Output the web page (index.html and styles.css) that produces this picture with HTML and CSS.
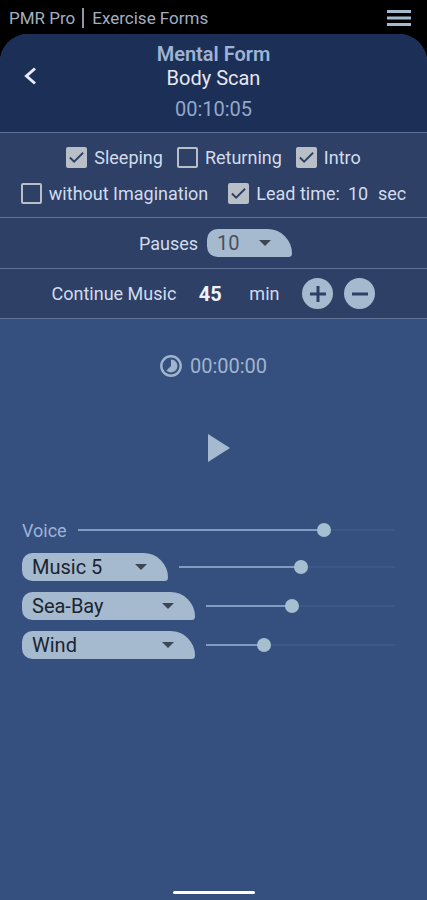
FILE: index.html
```html
<!DOCTYPE html>
<html lang="en">
<head>
    <meta charset="UTF-8">
    <meta name="viewport" content="width=device-width, initial-scale=1.0">
    <title>PMR Pro | Exercise Forms</title>
    <link rel="stylesheet" href="styles.css">
</head>
<body>

    <header class="top-bar">
        <span class="app-name">PMR Pro</span>
        <span class="page-name">Exercise Forms</span>
        <button class="menu-button" aria-label="Menu">
            <svg width="24" height="16" viewBox="0 0 24 16"><path d="M0 1.5h24M0 8h24M0 14.5h24" stroke="currentColor" stroke-width="3"/></svg>
        </button>
    </header>

    <main class="screen">
        <!-- Exercise title -->
        <div class="exercise-header">
            <button class="back-button" aria-label="Back">
                <svg width="14" height="18" viewBox="0 0 14 18"><path d="M12 1.500L3.500 9l8.500 7.500" fill="none" stroke="currentColor" stroke-width="3"/></svg>
            </button>
            <div class="exercise-title">
                <h1>Mental Form</h1>
                <h2>Body Scan</h2>
                <div class="duration">00:10:05</div>
            </div>
        </div>

        <!-- Options -->
        <div class="options">
            <div class="option-row">
                <label class="check"><input type="checkbox" checked>Sleeping</label>
                <label class="check"><input type="checkbox">Returning</label>
                <label class="check"><input type="checkbox" checked>Intro</label>
            </div>
            <div class="option-row wide">
                <label class="check"><input type="checkbox">without Imagination</label>
                <div class="lead-time">
                    <label class="check"><input type="checkbox" checked>Lead time:</label>
                    <input class="seconds" type="text" value="10" aria-label="Lead time in seconds">
                    <span>sec</span>
                </div>
            </div>
        </div>

        <div class="options pauses">
            <label for="pauses">Pauses</label>
            <span class="drop">
                <select id="pauses"><option>10</option></select>
            </span>
        </div>

        <div class="options continue">
            <label for="minutes">Continue Music</label>
            <input class="minutes" id="minutes" type="text" value="45">
            <span class="unit">min</span>
            <button class="round-button" aria-label="More">
                <svg width="16" height="16" viewBox="0 0 16 16"><path d="M0 8h16M8 0v16" stroke="currentColor" stroke-width="3"/></svg>
            </button>
            <button class="round-button" aria-label="Less">
                <svg width="16" height="16" viewBox="0 0 16 16"><path d="M0 8h16" stroke="currentColor" stroke-width="3"/></svg>
            </button>
        </div>

        <!-- Player -->
        <div class="timer">
            <svg width="22" height="22" viewBox="0 0 24 24">
                <circle cx="12" cy="12" r="10.600" fill="none" stroke="currentColor" stroke-width="2.600"/>
                <path d="M12 5a7 7 0 1 1-5 11.900L12 12z" fill="currentColor"/>
            </svg>
            <span>00:00:00</span>
        </div>
        <button class="play-button" aria-label="Play">
            <svg width="22" height="28" viewBox="0 0 22 28"><path d="M0 0l22 14L0 28z" fill="currentColor"/></svg>
        </button>

        <!-- Volumes -->
        <div class="mixer">
            <div class="channel voice">
                <label for="voice">Voice</label>
                <input type="range" id="voice" min="0" max="100" value="79" style="--level: 79%">
            </div>
            <div class="channel">
                <span class="drop music">
                    <select aria-label="Music"><option>Music 5</option></select>
                </span>
                <input type="range" aria-label="Music volume" min="0" max="100" value="57" style="--level: 57%">
            </div>
            <div class="channel">
                <span class="drop sound">
                    <select aria-label="First sound"><option>Sea-Bay</option></select>
                </span>
                <input type="range" aria-label="First sound volume" min="0" max="100" value="45" style="--level: 45%">
            </div>
            <div class="channel">
                <span class="drop sound">
                    <select aria-label="Second sound"><option>Wind</option></select>
                </span>
                <input type="range" aria-label="Second sound volume" min="0" max="100" value="29" style="--level: 29%">
            </div>
        </div>

        <div class="home-bar"></div>
    </main>

</body>
</html>
```
FILE: styles.css
```css
* {
    box-sizing: border-box;
}

body {
    margin: 0;
    min-height: 100vh;
    display: flex;
    flex-direction: column;
    background-color: #000;
    color: #d2dcee;
    font-family: Roboto, sans-serif;
    font-size: 18px;
}

button {
    display: flex;
    align-items: center;
    justify-content: center;
    padding: 0;
    border: none;
    background: none;
    color: #a5bace;
    cursor: pointer;
}

input, select {
    margin: 0;
    font-family: inherit;
    color: inherit;
}

/* Top bar */
.top-bar {
    display: flex;
    align-items: center;
    height: 34px;
    padding: 2px 16px 0 9px;
    font-size: 17px;
    color: #a3afc0;
}

.app-name {
    padding-right: 7px;
    border-right: 2px solid #8c98a9;
}

.page-name {
    padding-left: 8px;
}

.menu-button {
    margin-left: auto;
}

/* Main screen */
.screen {
    flex: 1;
    display: flex;
    flex-direction: column;
    background-color: #35507f;
    border-radius: 28px 28px 0 0;
    overflow: hidden;
}

.exercise-header {
    display: grid;
    grid-template-columns: 60px 1fr 60px;
    height: 99px;
    padding-top: 8px;
    background-color: #1c2f57;
    border-bottom: 1px solid #5f7399;
}

.back-button {
    height: 68px;
    color: #e6ebf5;
}

.exercise-title {
    text-align: center;
    line-height: 24px;
}

.exercise-title h1, .exercise-title h2 {
    margin: 0;
    font-size: 20px;
}

.exercise-title h1 {
    font-weight: 600;
    color: #9db4d6;
}

.exercise-title h2 {
    font-weight: 400;
    color: #e6e8ee;
}

.duration {
    margin-top: 7px;
    font-size: 20px;
    color: #92a8cb;
}

/* Option panels */
.options {
    padding: 6px 0;
    background-color: #2e4066;
    border-bottom: 1px solid #5f7399;
}

.option-row {
    display: flex;
    align-items: center;
    justify-content: center;
    gap: 14px;
    height: 36px;
}

.option-row.wide {
    gap: 20px;
}

.check {
    display: flex;
    align-items: center;
    gap: 7px;
}

.check input {
    appearance: none;
    width: 21px;
    height: 21px;
    border: 2px solid #b9bfc6;
    border-radius: 2px;
}

.check input:checked {
    background: #b9bfc6 url("data:image/svg+xml,%3Csvg xmlns='http://www.w3.org/2000/svg' viewBox='0 0 18 18'%3E%3Cpath d='M2 9l4.500 4.500L16 4' fill='none' stroke='%232e4066' stroke-width='2'/%3E%3C/svg%3E") center / 17px no-repeat;
}

.lead-time {
    display: flex;
    align-items: center;
    gap: 8px;
}

.seconds {
    width: 22px;
    padding: 0;
    border: none;
    background: none;
    font-size: 18px;
}

.pauses, .continue {
    display: flex;
    align-items: center;
    justify-content: center;
    gap: 9px;
    height: 51px;
    padding: 0 0 0 4px;
}

.continue {
    height: 50px;
    gap: 11px;
    padding: 0;
}

.minutes {
    width: 46px;
    padding: 0;
    border: none;
    background: none;
    font-size: 20px;
    font-weight: 700;
    text-align: center;
    color: #eef2fa;
}

.unit {
    margin: 0 12px 0 5px;
}

.round-button {
    width: 31px;
    height: 31px;
    border-radius: 50%;
    background-color: #a5bace;
    color: #2e4066;
}

/* Drop-downs, the arrow lies over the select */
.drop {
    position: relative;
    display: block;
    width: 85px;
    color: #1b2430;
}

.drop::after {
    content: "";
    position: absolute;
    top: 11px;
    right: 21px;
    border: 6px solid transparent;
    border-top-color: #3c4654;
    border-bottom: none;
    pointer-events: none;
}

.drop select {
    appearance: none;
    display: block;
    width: 100%;
    height: 28px;
    padding: 0 10px;
    border: none;
    border-radius: 12px 28px 4px 12px;
    background-color: #a5bace;
    font-size: 20px;
}

.pauses .drop {
    color: #46515f;
}

.drop.music {
    width: 146px;
}

.drop.sound {
    width: 173px;
}

/* Player */
.timer {
    display: flex;
    align-items: center;
    justify-content: center;
    gap: 8px;
    margin-top: 35px;
    font-size: 20px;
    color: #a0b5cc;
}

.play-button {
    align-self: center;
    margin: 56px 0;
    padding-left: 10px;
}

.mixer {
    display: flex;
    flex-direction: column;
    gap: 11px;
    padding: 0 32px 0 22px;
}

.channel {
    display: flex;
    align-items: center;
    gap: 11px;
}

.voice {
    height: 24px;
    color: #9db4d6;
}

.channel input {
    appearance: none;
    flex: 1;
    min-width: 0;
    height: 14px;
    background: linear-gradient(to right, #7f9cc2 var(--level), #3d5888 var(--level)) center / 100% 2px no-repeat;
}

.channel input::-webkit-slider-thumb {
    appearance: none;
    width: 14px;
    height: 14px;
    border-radius: 50%;
    background-color: #a5bfd0;
}

.channel input::-moz-range-thumb {
    width: 14px;
    height: 14px;
    border: none;
    border-radius: 50%;
    background-color: #a5bfd0;
}

.home-bar {
    width: 82px;
    height: 3px;
    margin: auto auto 6px;
    border-radius: 2px;
    background-color: #fff;
}
```
